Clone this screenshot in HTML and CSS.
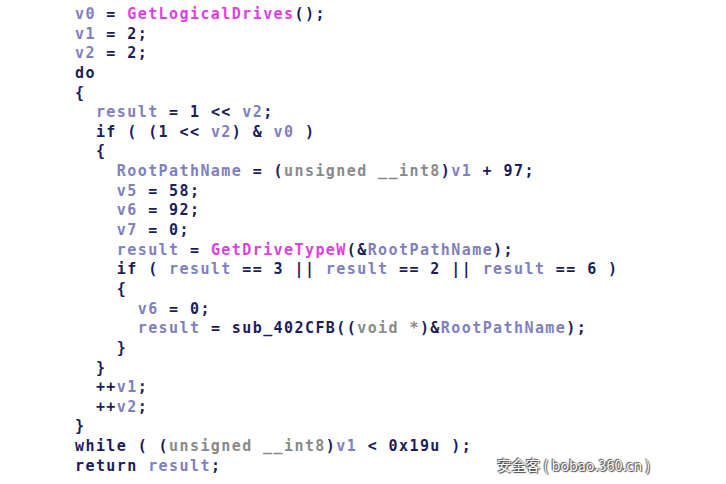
FILE: index.html
```html
<!DOCTYPE html>
<html>
<head>
<meta charset="utf-8">
<link rel="stylesheet" href="styles.css">
</head>
<body>
<div class="page">
<div class="code">
<div class="ln"><span class="v">v0</span> = <span class="f">GetLogicalDrives</span>();</div>
<div class="ln"><span class="v">v1</span> = 2;</div>
<div class="ln"><span class="v">v2</span> = 2;</div>
<div class="ln">do</div>
<div class="ln">{</div>
<div class="ln">  <span class="v">result</span> = 1 &lt;&lt; <span class="v">v2</span>;</div>
<div class="ln">  if ( (1 &lt;&lt; <span class="v">v2</span>) &amp; <span class="v">v0</span> )</div>
<div class="ln">  {</div>
<div class="ln">    <span class="v">RootPathName</span> = (<span class="t">unsigned __int8</span>)<span class="v">v1</span> + 97;</div>
<div class="ln">    <span class="v">v5</span> = 58;</div>
<div class="ln">    <span class="v">v6</span> = 92;</div>
<div class="ln">    <span class="v">v7</span> = 0;</div>
<div class="ln">    <span class="v">result</span> = <span class="f">GetDriveTypeW</span>(&amp;<span class="v">RootPathName</span>);</div>
<div class="ln">    if ( <span class="v">result</span> == 3 || <span class="v">result</span> == 2 || <span class="v">result</span> == 6 )</div>
<div class="ln">    {</div>
<div class="ln">      <span class="v">v6</span> = 0;</div>
<div class="ln">      <span class="v">result</span> = sub_402CFB((<span class="t">void *</span>)&amp;<span class="v">RootPathName</span>);</div>
<div class="ln">    }</div>
<div class="ln">  }</div>
<div class="ln">  ++<span class="v">v1</span>;</div>
<div class="ln">  ++<span class="v">v2</span>;</div>
<div class="ln">}</div>
<div class="ln">while ( (<span class="t">unsigned __int8</span>)<span class="v">v1</span> &lt; 0x19u );</div>
<div class="ln">return <span class="v">result</span>;</div>
</div>
<div class="mark">安全客 ( bobao.360.cn )</div>
</div>
</body>
</html>
```
FILE: styles.css
```css
html, body {
  margin: 0;
  padding: 0;
  background: #ffffff;
}
.page {
  position: relative;
  width: 726px;
  height: 484px;
  overflow: hidden;
}
.code {
  padding: 5px 0 0 75px;
  font-family: "DejaVu Sans Mono", "Liberation Mono", monospace;
  font-weight: bold;
  font-size: 15px;
  letter-spacing: 1.42px;
  line-height: 19.65px;
  color: #1c1c5c;
}
.ln {
  white-space: pre;
  height: 19.65px;
}
.v { color: #7f80bd; }
.f { color: #e03ee0; }
.t { color: #8a8a8a; }
.mark {
  position: absolute;
  left: 497px;
  top: 455px;
  font-family: "Noto Sans CJK SC", "Liberation Sans", sans-serif;
  font-size: 14.4px;
  line-height: 20px;
  color: #ffffff;
  text-shadow: 0 0 1px #333, 1px 1px 1px #444, -1px -1px 1px #555;
}
```
